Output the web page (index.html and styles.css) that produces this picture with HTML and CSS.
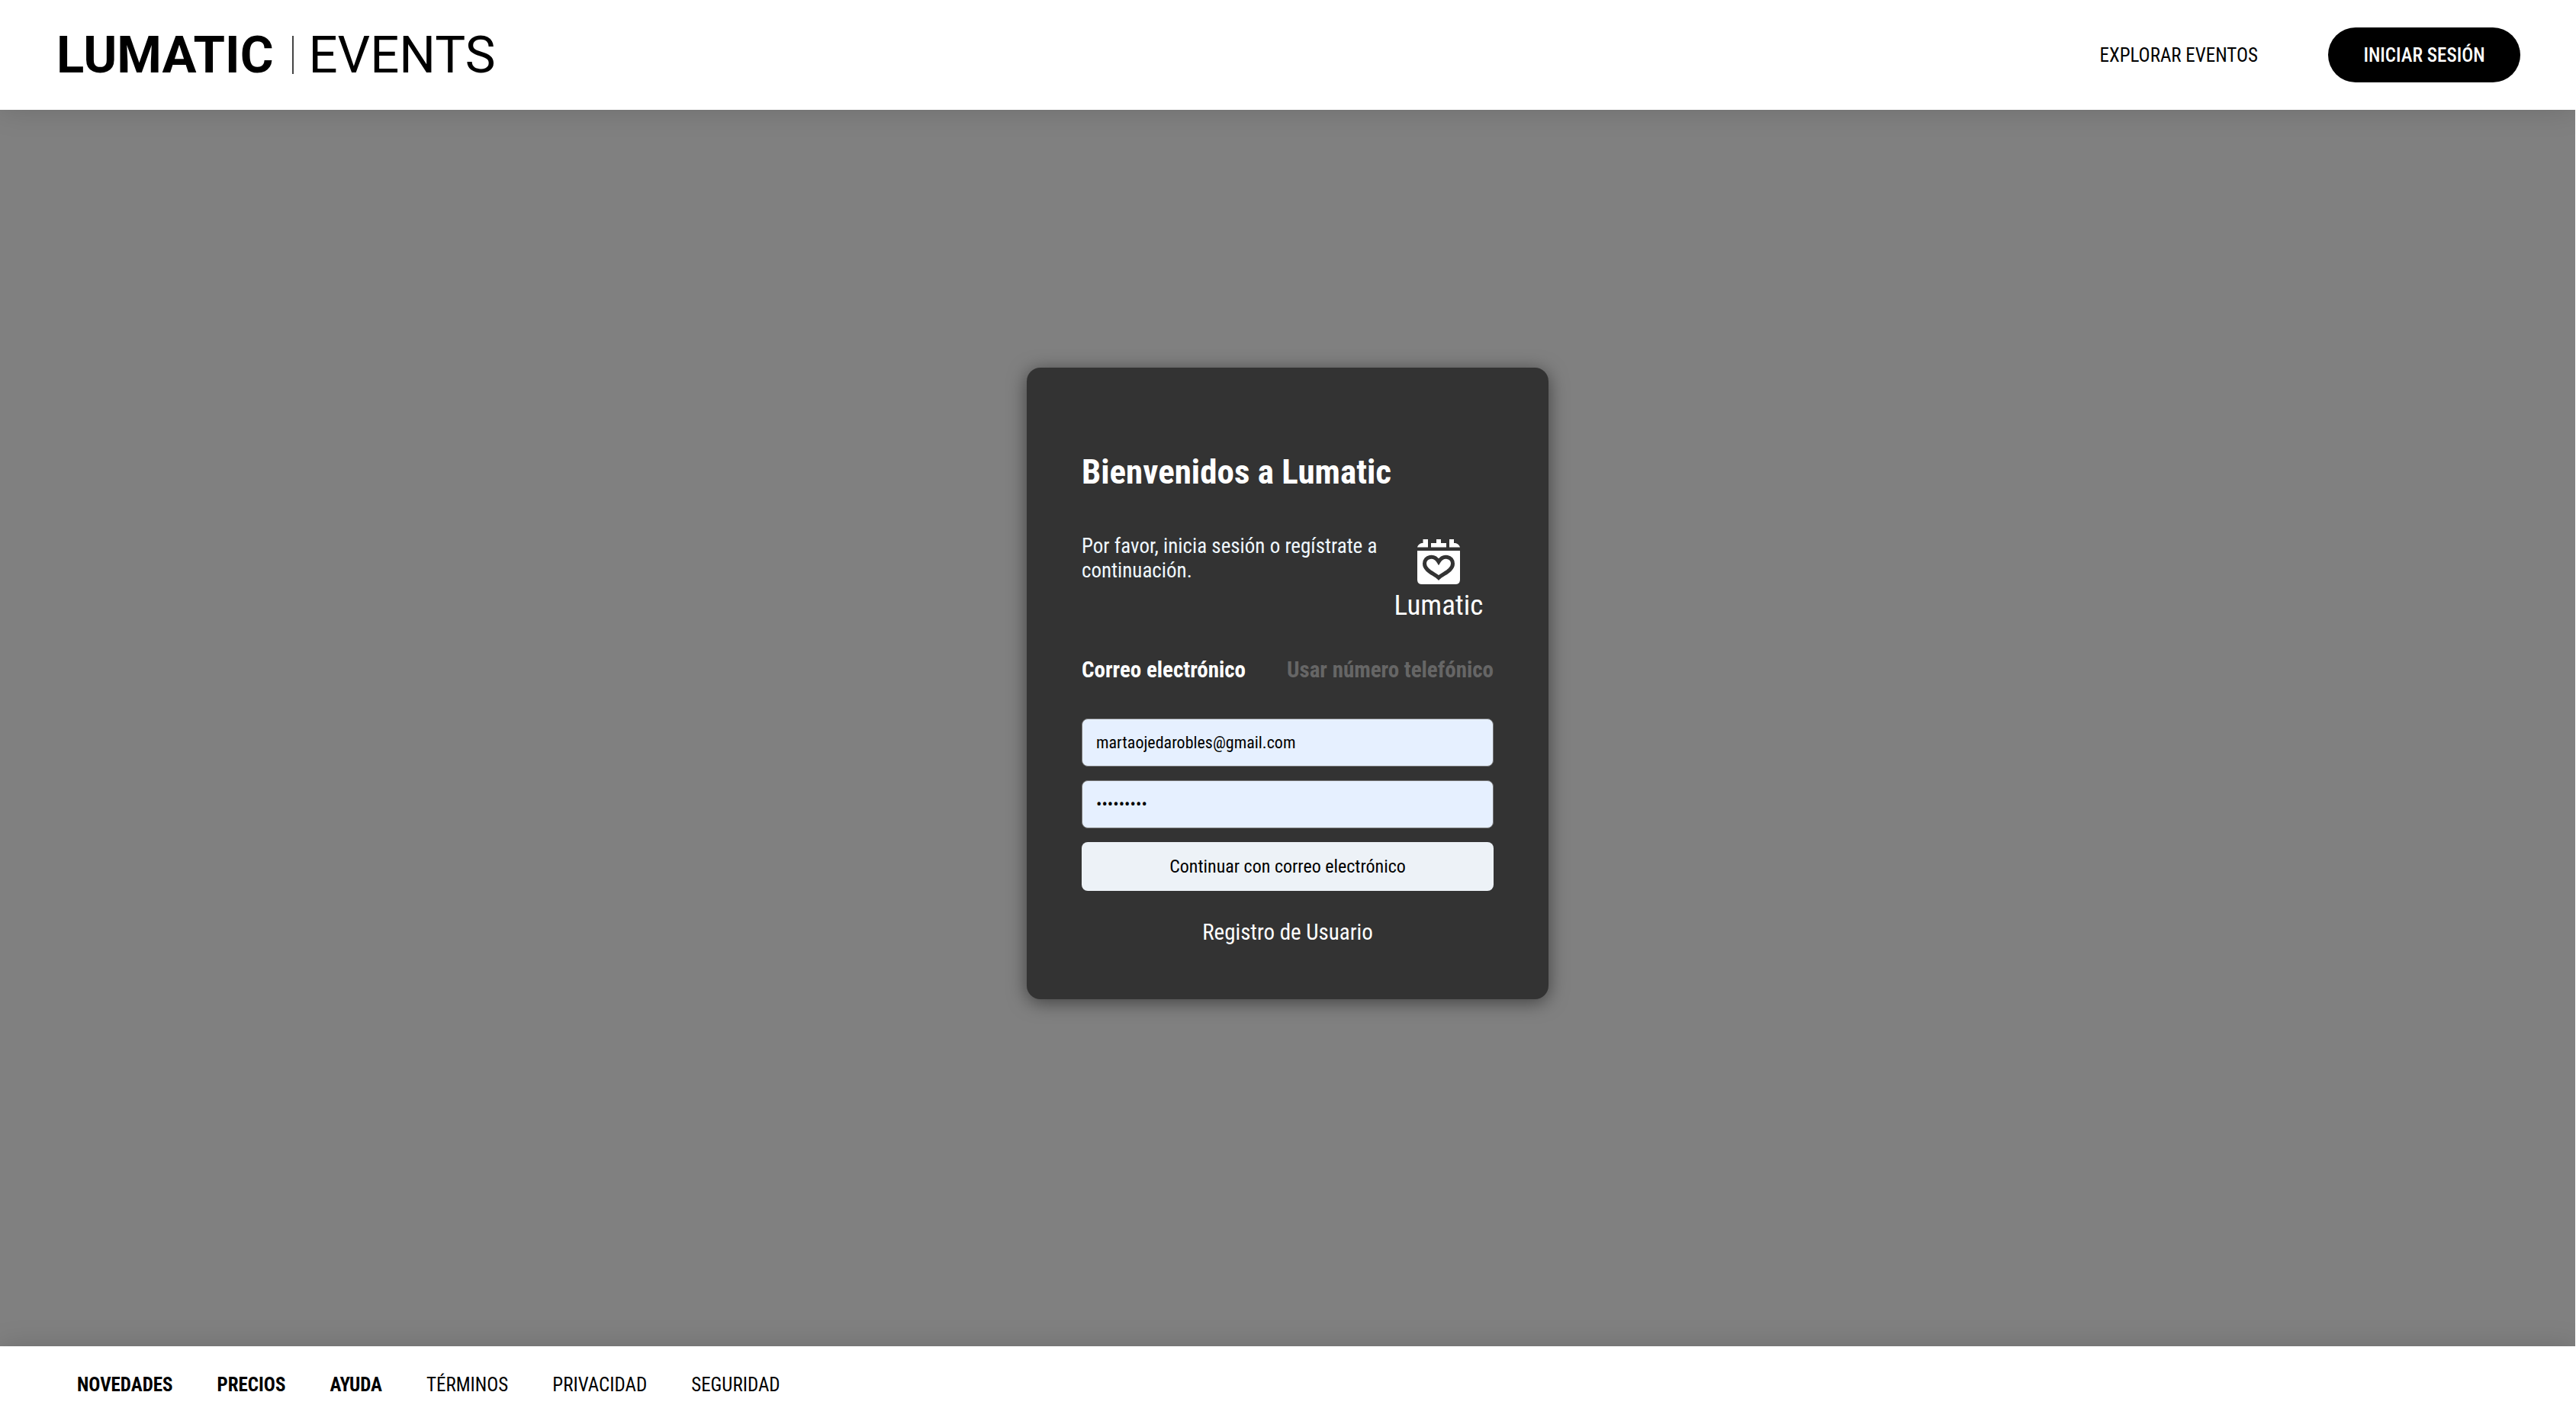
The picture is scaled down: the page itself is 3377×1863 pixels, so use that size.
FILE: index.html
```html
<!DOCTYPE html>
<html lang="es">
<head>
<meta charset="utf-8">
<title>Lumatic Events</title>
<meta name="viewport" content="width=device-width, initial-scale=1">
<link rel="stylesheet" href="styles.css">
</head>
<body>
<header class="site-header">
  <a class="brand" href="#"><span class="brand-name">LUMATIC</span><span class="brand-divider"></span><span class="brand-product">EVENTS</span></a>
  <nav class="site-nav">
    <a class="nav-link" href="#">EXPLORAR EVENTOS</a>
    <button class="login-button" type="button">INICIAR SESIÓN</button>
  </nav>
</header>
<main class="page">
  <section class="card">
    <h1 class="card-title">Bienvenidos a Lumatic</h1>
    <div class="intro">
      <p class="intro-text">Por favor, inicia sesión o regístrate a continuación.</p>
      <div class="emblem">
        <svg class="emblem-icon" viewBox="0 0 56 59" aria-hidden="true">
          <path fill="#fff" d="M0 10.500C1 7 4 5 7.500 5V0H14V10.500ZM18 10.500V5H25V0H31V5H38V10.500ZM42 10.500V0H48V5C52 5 55 7 56 10.500ZM0 15H56V53Q56 59 50 59H6Q0 59 0 53Z"/>
          <path fill="none" stroke="#333" stroke-width="5" d="M28 50.500C22 45 9.500 41 9.500 32C9.500 22.500 22 19.500 28 29.500C34 19.500 46.500 22.500 46.500 32C46.500 41 34 45 28 50.500Z"/>
        </svg>
        <span class="emblem-name">Lumatic</span>
      </div>
    </div>
    <div class="tabs">
      <button class="tab tab-active" type="button">Correo electrónico</button>
      <button class="tab" type="button">Usar número telefónico</button>
    </div>
    <form class="login-form">
      <input class="field" type="email" aria-label="Correo electrónico" value="martaojedarobles@gmail.com">
      <input class="field" type="password" aria-label="Contraseña" value="123456789">
      <button class="submit" type="button">Continuar con correo electrónico</button>
    </form>
    <a class="register" href="#">Registro de Usuario</a>
  </section>
</main>
<footer class="site-footer">
  <a class="footer-link footer-strong" href="#">NOVEDADES</a>
  <a class="footer-link footer-strong" href="#">PRECIOS</a>
  <a class="footer-link footer-strong" href="#">AYUDA</a>
  <a class="footer-link" href="#">TÉRMINOS</a>
  <a class="footer-link" href="#">PRIVACIDAD</a>
  <a class="footer-link" href="#">SEGURIDAD</a>
</footer>
</body>
</html>
```
FILE: styles.css
```css
* {
  box-sizing: border-box;
}

body {
  margin: 0;
  min-height: 100vh;
  display: flex;
  flex-direction: column;
  border-right: 1px solid #fff;
  background: #808080;
  color: #000;
  font-family: "Roboto Condensed", "Liberation Sans Narrow", Roboto, sans-serif;
  font-size: 25px;
}

a {
  color: inherit;
  text-decoration: none;
}

button,
input {
  font: inherit;
}

.site-header {
  display: flex;
  align-items: center;
  justify-content: space-between;
  height: 144px;
  padding: 0 72px 0 74px;
  background: #fff;
  box-shadow: 0 0 36px rgba(0, 0, 0, 0.15);
}

.brand {
  display: flex;
  align-items: center;
  font-family: Roboto, sans-serif;
  font-size: 67px;
  line-height: 80px;
}

.brand-name {
  font-weight: 700;
}

.brand-divider {
  width: 2px;
  height: 50px;
  margin: 0 20px 0 24px;
  background: #444;
}

.site-nav {
  display: flex;
  align-items: center;
  gap: 92px;
}

.login-button {
  width: 252px;
  height: 72px;
  padding: 0;
  border: 0;
  border-radius: 36px;
  background: #000;
  color: #fff;
  font-weight: 500;
}

.page {
  flex: 1;
  display: flex;
  align-items: center;
  justify-content: center;
  padding: 36px;
}

.card {
  width: 684px;
  margin-bottom: 118px;
  padding: 110px 72px 70px;
  display: flex;
  flex-direction: column;
  border-radius: 18px;
  background: #333;
  color: #fff;
  box-shadow: 0 4px 24px rgba(0, 0, 0, 0.5);
}

.card-title {
  margin: 0;
  font-size: 45px;
  line-height: 54px;
  font-weight: 700;
}

.intro {
  display: flex;
  height: 114px;
  margin-top: 54px;
}

.intro-text {
  width: 396px;
  margin: 0;
  color: #f0f8ff;
  font-size: 27px;
  line-height: 32px;
}

.emblem {
  width: 144px;
  padding-top: 7px;
  display: flex;
  flex-direction: column;
  align-items: center;
}

.emblem-icon {
  flex: none;
  width: 56px;
  height: 59px;
}

.emblem-name {
  font-size: 37px;
  line-height: 56px;
}

.tabs {
  display: flex;
  justify-content: space-between;
  margin-top: 46px;
}

.tab {
  padding: 0;
  border: 0;
  background: none;
  color: #666;
  font-size: 29px;
  line-height: 36px;
  font-weight: 700;
}

.tab-active {
  color: #fff;
}

.login-form {
  display: flex;
  flex-direction: column;
  gap: 18px;
  margin-top: 46px;
}

.field {
  width: 100%;
  height: 63px;
  padding: 0 18px;
  border: 1px solid #767676;
  border-radius: 8px;
  background: #e6f0ff;
  color: #000;
  font-size: 22px;
}

.submit {
  height: 64px;
  border: 0;
  border-radius: 8px;
  background: #edf2f7;
  color: #000;
  font-size: 24px;
}

.register {
  margin-top: 36px;
  font-size: 29px;
  line-height: 36px;
  text-align: center;
}

.site-footer {
  display: flex;
  align-items: center;
  gap: 58px;
  height: 98px;
  padding: 2px 101px 0;
  background: #fff;
  box-shadow: 0 0 36px rgba(0, 0, 0, 0.15);
}

.footer-strong {
  font-weight: 700;
}
```
